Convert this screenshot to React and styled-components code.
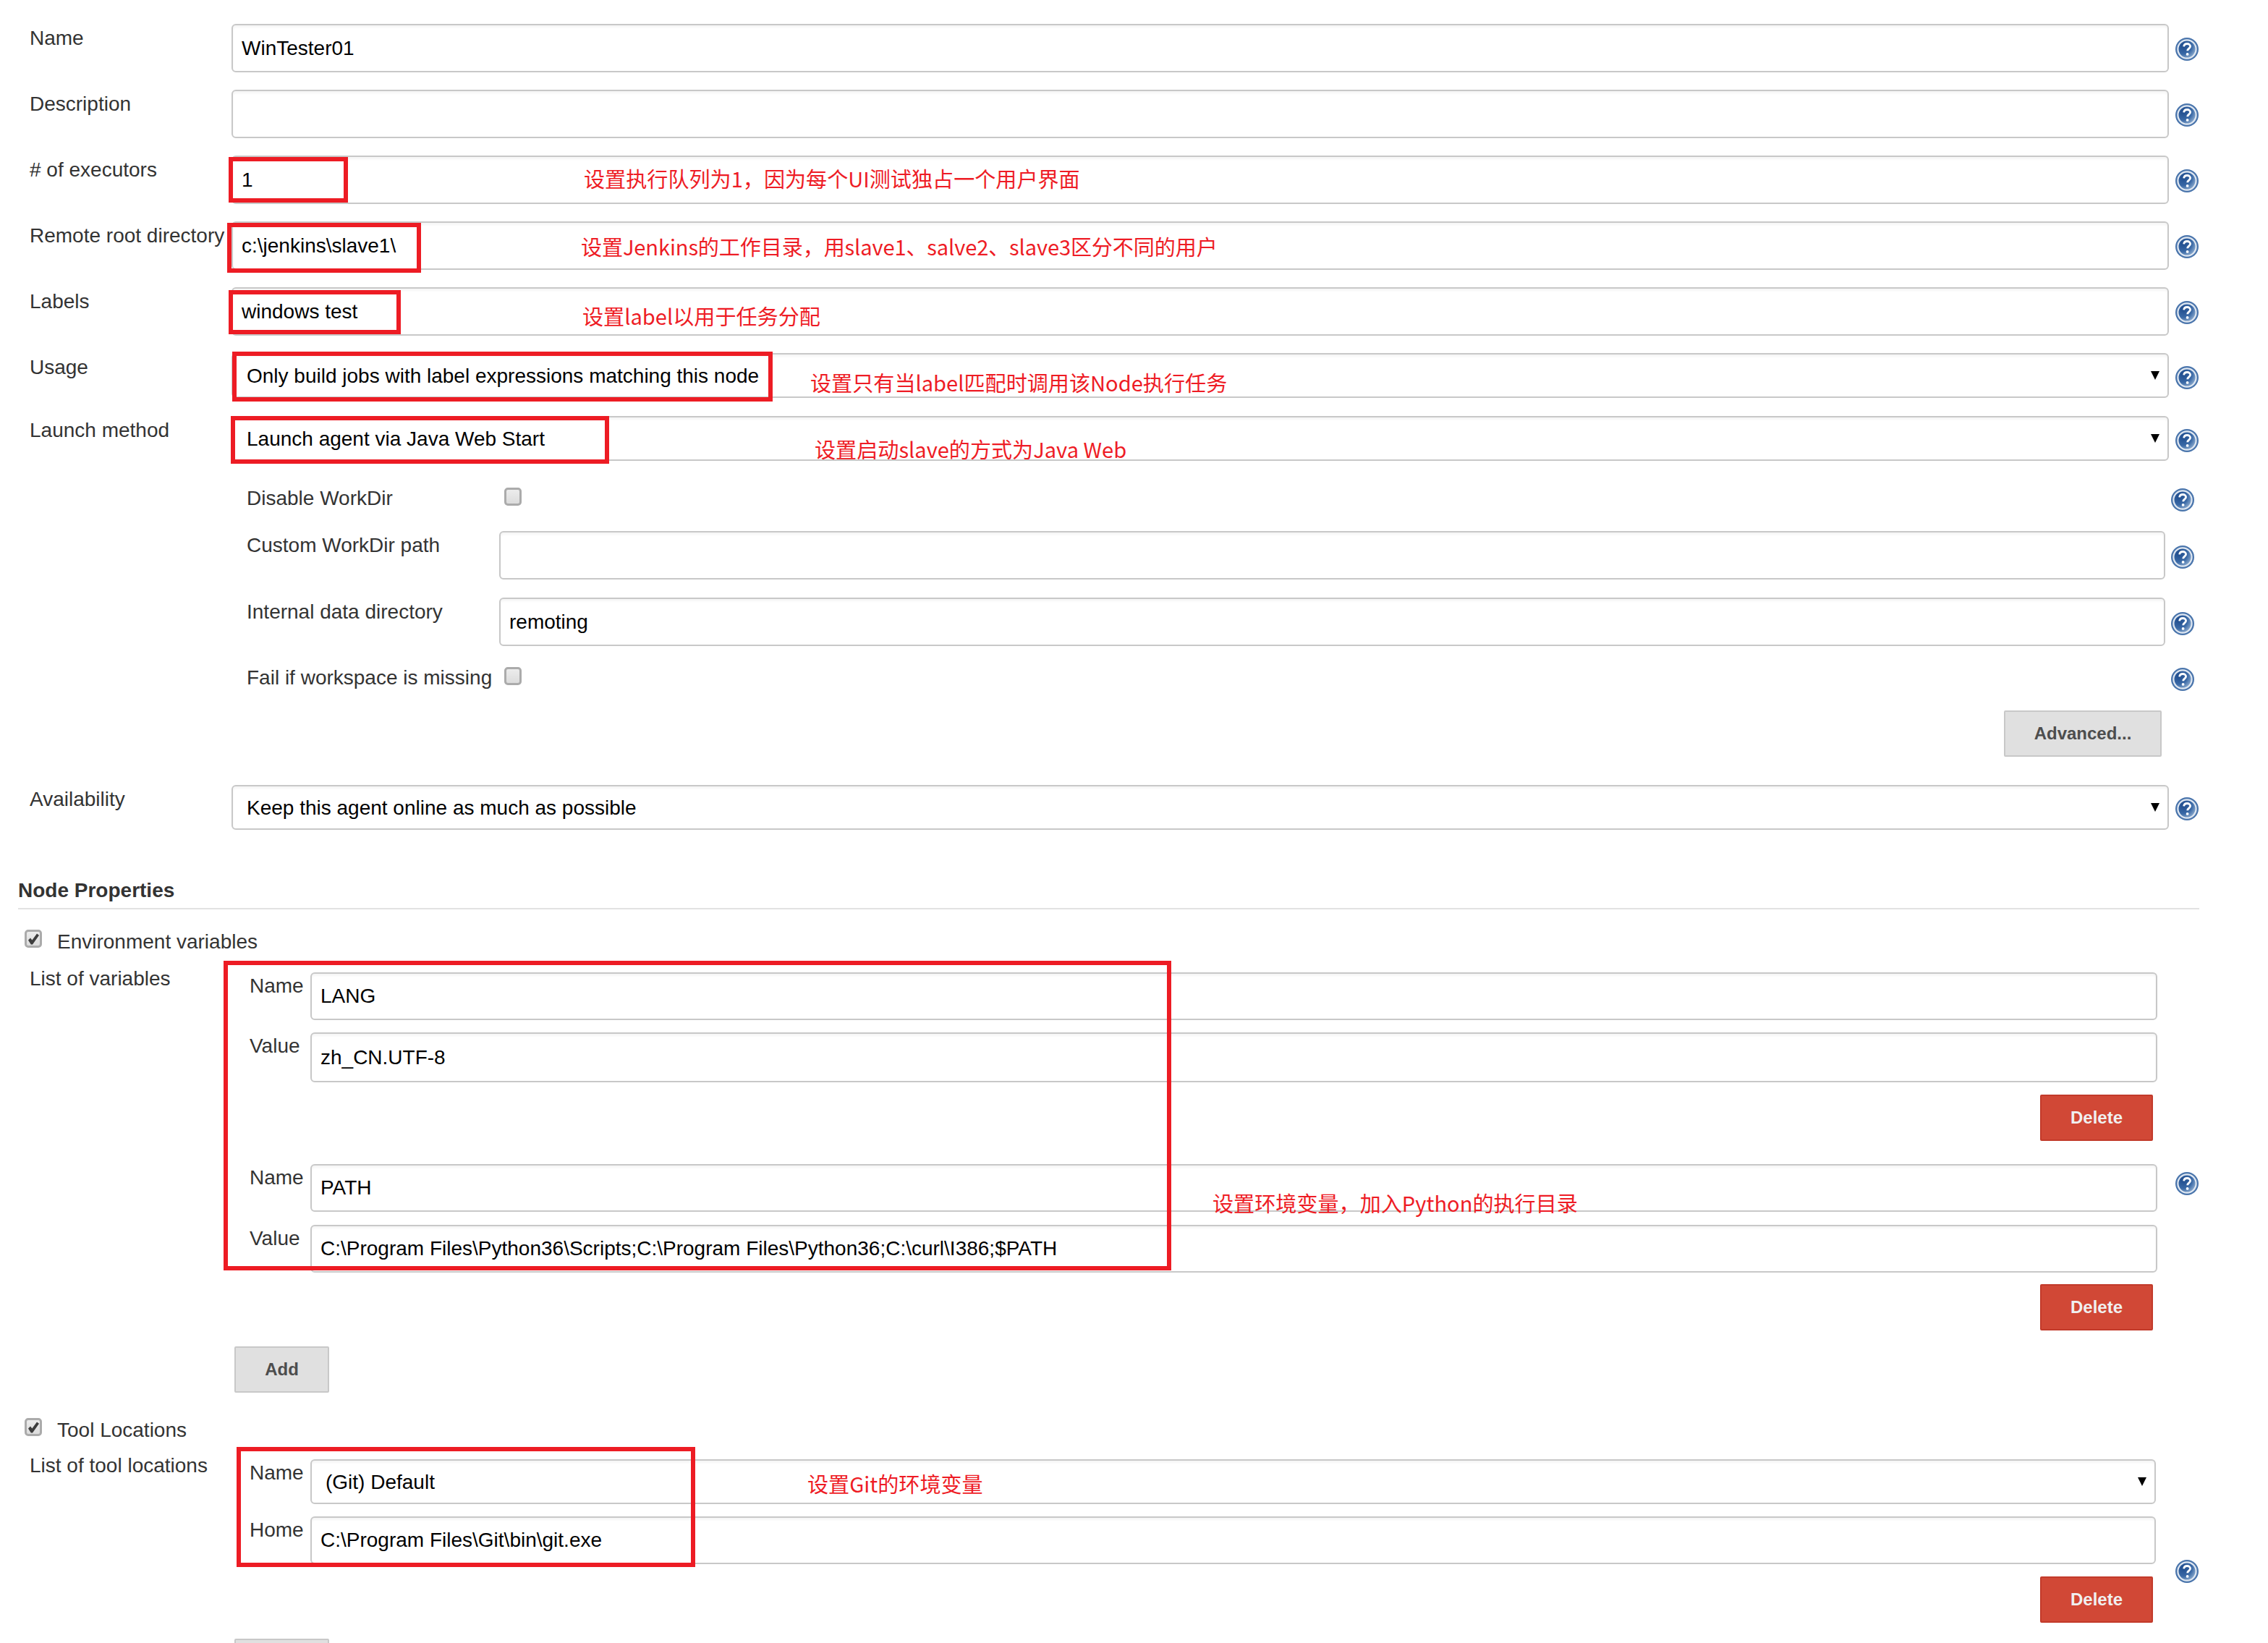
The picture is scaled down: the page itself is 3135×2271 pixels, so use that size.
import React from "react";
import styled, { createGlobalStyle } from "styled-components";

const GlobalStyle = createGlobalStyle`
  html, body {
    margin: 0;
    padding: 0;
    background: #fff;
  }
  body {
    width: 3135px;
    height: 2271px;
    overflow: hidden;
    font-family: "Liberation Sans", Arial, sans-serif;
    color: #333;
  }
`;

const HelpIcon = () => (
  <svg width="32" height="32" viewBox="0 0 32 32">
    <defs>
      <radialGradient id="helpFill" cx="30%" cy="30%" r="85%">
        <stop offset="0%" stopColor="#1f4c8d" />
        <stop offset="55%" stopColor="#3a69a6" />
        <stop offset="100%" stopColor="#a3bdd9" />
      </radialGradient>
    </defs>
    <circle cx="16" cy="16" r="16" fill="#4a75ac" />
    <circle cx="16" cy="16" r="12.6" fill="url(#helpFill)" stroke="#dfe7f1" strokeWidth="2.2" />
    <path
      d="M11.6 12.4c.3-2.6 2.2-3.9 4.6-3.9 2.5 0 4.4 1.4 4.4 3.6 0 1.8-1.1 2.6-2.3 3.4-1 .7-1.6 1.3-1.6 2.7"
      fill="none"
      stroke="#fff"
      strokeWidth="2.8"
    />
    <circle cx="16.6" cy="22.9" r="1.9" fill="#fff" />
  </svg>
);

const Check = () => (
  <svg width="18" height="18" viewBox="0 0 18 18">
    <path d="M2 10.5l3-3 2.4 3L14 1.5l3 2.2L8 16.5h-2.2z" fill="#3d3d3d" />
  </svg>
);

const Page = styled.div`
  position: relative;
  width: 3135px;
  height: 2271px;
  padding-top: 33px;
  box-sizing: border-box;
`;

const Row = styled.div`
  display: flex;
  align-items: flex-start;
  margin-bottom: ${p => p.$after || 0}px;
  padding-left: ${p => p.$left || 41}px;
`;

const Label = styled.div`
  flex: 0 0 ${p => p.$width || 279}px;
  font-size: 28px;
  line-height: 36px;
  padding-top: 2px;
  white-space: nowrap;
  color: #333;
`;

const CheckLabel = styled(Label)`
  margin-top: -5px;
`;

const Input = styled.div`
  box-sizing: border-box;
  flex: 0 0 ${p => p.$width || 2678}px;
  height: ${p => p.$h || 67}px;
  display: flex;
  align-items: center;
  padding: 0 12px;
  border: 2px solid #c8c8c8;
  border-radius: 6px;
  box-shadow: inset 0 3px 3px rgba(0, 0, 0, 0.04);
  font-size: 28px;
  color: #000;
  white-space: nowrap;
`;

const Select = styled(Input)`
  height: ${p => p.$h || 62}px;
  padding: 2px 11px 0 19px;
  justify-content: space-between;
`;

const Arrow = styled.span`
  width: 0;
  height: 0;
  margin-top: -2px;
  border-left: 6px solid transparent;
  border-right: 6px solid transparent;
  border-top: 12px solid #000;
`;

const Help = styled.div`
  flex: 0 0 32px;
  height: 32px;
  margin-left: ${p => p.$left || 9}px;
  margin-top: ${p => p.$top || 18}px;
`;

const CheckBox = styled.span`
  box-sizing: border-box;
  flex: 0 0 24px;
  width: 24px;
  height: 25px;
  display: flex;
  align-items: center;
  justify-content: center;
  border: 3px solid #ababab;
  border-radius: 5px;
  background: linear-gradient(#ececec, #dcdcdc);
`;

const CheckSlot = styled.div`
  flex: 0 0 24px;
  margin-left: 7px;
  margin-right: auto;
`;

const SubRow = styled(Row)`
  width: 2692px;
  height: ${p => (p.$h ? `${p.$h}px` : "auto")};
  padding-left: 341px;
  box-sizing: content-box;
`;

const Actions = styled.div`
  display: flex;
  justify-content: ${p => (p.$start ? "flex-start" : "flex-end")};
  padding-left: ${p => p.$left || 0}px;
  width: ${p => p.$width || 2988}px;
  box-sizing: border-box;
  margin-bottom: ${p => p.$after || 0}px;
`;

const Button = styled.div`
  box-sizing: border-box;
  flex: 0 0 auto;
  width: ${p => p.$width}px;
  height: 64px;
  display: flex;
  align-items: center;
  justify-content: center;
  background: #e0e0e0;
  border: 2px solid #c8c8c8;
  border-radius: 2px;
  font-size: 24px;
  font-weight: bold;
  color: #4d4d4d;
`;

const DeleteButton = styled(Button)`
  background: #d14836;
  border-color: #c23a2a;
  color: #f0f0f0;
`;

const Heading = styled.div`
  margin: 64px 95px 0 25px;
  padding-top: 4px;
  height: 40px;
  border-bottom: 2px solid #e2e2e2;
  font-size: 28px;
  line-height: 32px;
  font-weight: bold;
  color: #333;
`;

const OptionalRow = styled.div`
  display: flex;
  align-items: flex-start;
  padding-left: 34px;
  height: ${p => p.$h}px;
  margin-top: ${p => p.$top || 0}px;
  margin-bottom: ${p => p.$after || 0}px;
`;

const OptionalText = styled.div`
  margin-left: 21px;
  font-size: 28px;
  line-height: 34px;
  color: #333;
`;

const ListLayout = styled.div`
  display: flex;
  align-items: flex-start;
  padding-left: 41px;
`;

const ListLabel = styled.div`
  flex: 0 0 304px;
  margin-top: -10px;
  font-size: 28px;
  line-height: 37px;
  white-space: nowrap;
  color: #333;
`;

const ListBody = styled.div`
  display: flex;
  flex-direction: column;
`;

const Pair = styled.div`
  display: flex;
  align-items: flex-start;
  height: ${p => p.$h || 66}px;
  margin-bottom: ${p => p.$after || 0}px;
`;

const PairLabel = styled.div`
  flex: 0 0 84px;
  font-size: 28px;
  line-height: 37px;
  color: #333;
`;

const RedBox = styled.div`
  position: absolute;
  box-sizing: border-box;
  left: ${p => p.$x}px;
  top: ${p => p.$y}px;
  width: ${p => p.$w}px;
  height: ${p => p.$h}px;
  border: 6px solid #ed1c24;
  pointer-events: none;
`;

const Note = styled.div`
  position: absolute;
  left: ${p => p.$x}px;
  top: ${p => p.$y}px;
  font-family: "Noto Sans CJK SC", "Liberation Sans", sans-serif;
  font-size: 29.1px;
  line-height: 40px;
  letter-spacing: ${p => p.$spacing || 0}px;
  white-space: nowrap;
  color: #ee1c25;
`;

const boxes = [
  [316, 217, 165, 63],
  [314, 308, 268, 69],
  [316, 401, 238, 61],
  [321, 486, 747, 69],
  [319, 575, 523, 66],
  [309, 1328, 1310, 428],
  [327, 2000, 634, 166]
];

const notes = [
  [807, 226, "设置执行队列为1，因为每个UI测试独占一个用户界面"],
  [803, 320, "设置Jenkins的工作目录，用slave1、salve2、slave3区分不同的用户", -0.13],
  [805, 416, "设置label以用于任务分配"],
  [1120, 508, "设置只有当label匹配时调用该Node执行任务"],
  [1126, 600, "设置启动slave的方式为Java Web"],
  [1676, 1642, "设置环境变量，加入Python的执行目录"],
  [1116, 2030, "设置Git的环境变量"]
];

const TextRow = ({ label, value, after, helpTop }) => (
  <Row $after={after}>
    <Label>{label}</Label>
    <Input>{value}</Input>
    <Help $top={helpTop}><HelpIcon /></Help>
  </Row>
);

const SelectRow = ({ label, value, after, helpTop }) => (
  <Row $after={after}>
    <Label>{label}</Label>
    <Select>
      {value}
      <Arrow />
    </Select>
    <Help $top={helpTop}><HelpIcon /></Help>
  </Row>
);

const AdvancedRow = ({ label, value, after }) => (
  <SubRow $left={341} $after={after}>
    <Label $width={349}>{label}</Label>
    <Input $width={2303}>{value}</Input>
    <Help $left={8} $top={20}><HelpIcon /></Help>
  </SubRow>
);

const CheckRow = ({ label, after }) => (
  <SubRow $left={341} $h={32} $after={after}>
    <CheckLabel $width={356}>{label}</CheckLabel>
    <CheckBox />
    <CheckSlot />
    <Help $top={1} $left={0}><HelpIcon /></Help>
  </SubRow>
);

const App = () => {
  return (
    <Page>
      <GlobalStyle />
      <TextRow label="Name" value="WinTester01" after={24} helpTop={19} />
      <TextRow label="Description" after={24} helpTop={19} />
      <TextRow label="# of executors" value="1" after={24} helpTop={19} />
      <TextRow label="Remote root directory" value="c:\jenkins\slave1\" after={24} helpTop={19} />
      <TextRow label="Labels" value="windows test" after={24} helpTop={19} />
      <SelectRow label="Usage" value="Only build jobs with label expressions matching this node" after={25} />
      <SelectRow label="Launch method" value="Launch agent via Java Web Start" after={37} />

      <CheckRow label="Disable WorkDir" after={28} />
      <AdvancedRow label="Custom WorkDir path" after={25} />
      <AdvancedRow label="Internal data directory" value="remoting" after={29} />
      <CheckRow label="Fail if workspace is missing" after={28} />
      <Actions $after={39}>
        <Button $width={218}>Advanced...</Button>
      </Actions>

      <SelectRow label="Availability" value="Keep this agent online as much as possible" helpTop={17} />

      <Heading>Node Properties</Heading>

      <OptionalRow $top={28} $h={32} $after={27}>
        <CheckBox><Check /></CheckBox>
        <OptionalText>Environment variables</OptionalText>
      </OptionalRow>
      <ListLayout>
        <ListLabel>List of variables</ListLabel>
        <ListBody>
          <Pair $after={17}>
            <PairLabel>Name</PairLabel>
            <Input $width={2553} $h={66}>LANG</Input>
          </Pair>
          <Pair $h={69} $after={17}>
            <PairLabel>Value</PairLabel>
            <Input $width={2553} $h={69}>zh_CN.UTF-8</Input>
          </Pair>
          <Actions $width={2631} $after={32}>
            <DeleteButton $width={156}>Delete</DeleteButton>
          </Actions>
          <Pair $after={18}>
            <PairLabel>Name</PairLabel>
            <Input $width={2553} $h={66}>PATH</Input>
            <Help $left={25} $top={11}><HelpIcon /></Help>
          </Pair>
          <Pair $after={16}>
            <PairLabel>Value</PairLabel>
            <Input $width={2553} $h={66}>{"C:\\Program Files\\Python36\\Scripts;C:\\Program Files\\Python36;C:\\curl\\I386;$PATH"}</Input>
          </Pair>
          <Actions $width={2631} $after={22}>
            <DeleteButton $width={156}>Delete</DeleteButton>
          </Actions>
        </ListBody>
      </ListLayout>
      <Actions $start $left={324} $after={35}>
        <Button $width={131}>Add</Button>
      </Actions>

      <OptionalRow $h={32} $after={25}>
        <CheckBox><Check /></CheckBox>
        <OptionalText>Tool Locations</OptionalText>
      </OptionalRow>
      <ListLayout>
        <ListLabel>List of tool locations</ListLabel>
        <ListBody>
          <Pair $h={62} $after={17}>
            <PairLabel>Name</PairLabel>
            <Select $width={2551}>
              (Git) Default
              <Arrow />
            </Select>
          </Pair>
          <Pair $after={17}>
            <PairLabel>Home</PairLabel>
            <Input $width={2551} $h={66}>{"C:\\Program Files\\Git\\bin\\git.exe"}</Input>
            <Help $left={27} $top={60}><HelpIcon /></Help>
          </Pair>
          <Actions $width={2631} $after={22}>
            <DeleteButton $width={156}>Delete</DeleteButton>
          </Actions>
        </ListBody>
      </ListLayout>
      <Actions $start $left={324}>
        <Button $width={131} />
      </Actions>

      {boxes.map(([x, y, w, h]) => (
        <RedBox key={`${x}-${y}`} $x={x} $y={y} $w={w} $h={h} />
      ))}
      {notes.map(([x, y, text, spacing]) => (
        <Note key={text} $x={x} $y={y} $spacing={spacing}>{text}</Note>
      ))}
    </Page>
  );
};

export default App;
